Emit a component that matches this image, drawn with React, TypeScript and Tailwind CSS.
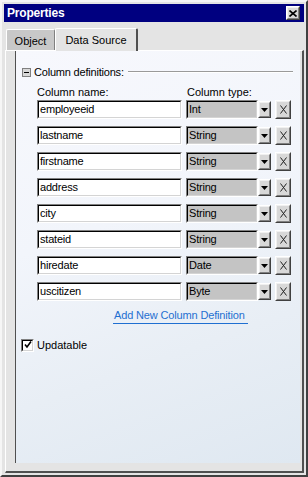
import React from 'react'

const columns = [
  { name: 'employeeid', type: 'Int' },
  { name: 'lastname', type: 'String' },
  { name: 'firstname', type: 'String' },
  { name: 'address', type: 'String' },
  { name: 'city', type: 'String' },
  { name: 'stateid', type: 'String' },
  { name: 'hiredate', type: 'Date' },
  { name: 'uscitizen', type: 'Byte' },
]

// sunken 3d frame used by text boxes, combos and the checkbox
const Sunken = ({ className, children }: { className: string; children?: React.ReactNode }) => (
  <div className="border border-t-[#808080] border-l-[#808080] border-b-white border-r-white">
    <div className={`border border-t-black border-l-black border-b-[#d4d4d4] border-r-[#d4d4d4] ${className}`}>
      {children}
    </div>
  </div>
)

const Raised = ({ className, children }: { className: string; children?: React.ReactNode }) => (
  <div className="border border-t-white border-l-white border-b-[#404040] border-r-[#404040]">
    <div className={`border border-t-[#f0f0f0] border-l-[#f0f0f0] border-b-[#808080] border-r-[#808080] bg-[#d8d8d8] flex items-center justify-center ${className}`}>
      {children}
    </div>
  </div>
)

const ColumnRow = ({ name, type }: { name: string; type: string }) => (
  <div className="flex items-center h-[19px]">
    <Sunken className="w-[143px] h-[17px] bg-white pl-[1px] leading-[15px] tracking-[-0.2px]">{name}</Sunken>
    <div className="ml-[4px] flex items-center">
      <Sunken className="w-[70px] h-[17px] bg-[#c4c4c4] pl-[1px] leading-[15px] tracking-[-0.2px]">{type}</Sunken>
      <Raised className="w-[11px] h-[15px]">
        <svg width="7" height="4" viewBox="0 0 7 4">
          <path d="M0 0h7L3.5 4z" fill="#000" />
        </svg>
      </Raised>
    </div>
    <div className="ml-[4px]">
      <Raised className="w-[14px] h-[17px]">
        <svg width="7" height="9" viewBox="0 0 7 9">
          <path d="M0.5 0.5L6.5 8.5M6.5 0.5L0.5 8.5" stroke="#202020" strokeWidth="1" />
        </svg>
      </Raised>
    </div>
  </div>
)

export default function App() {
  return (
    <div className="w-[308px] h-[477px] bg-[#e4e4e4] border-2 border-t-[#f6f6f6] border-l-[#f6f6f6] border-r-[#404040] border-b-[#404040] p-[2px] flex flex-col font-['Liberation_Sans',Arial,sans-serif] text-[11px] text-black overflow-hidden">
      {/* title bar */}
      <div className="h-[18px] bg-[#000080] flex items-center justify-between pl-[3px] pr-[4px] shrink-0">
        <span className="text-white font-bold text-[12px] tracking-[-0.2px]">Properties</span>
        <Raised className="w-[12px] h-[12px]">
          <svg width="8" height="7" viewBox="0 0 8 7">
            <path d="M0.5 0.5L7.5 6.5M7.5 0.5L0.5 6.5" stroke="#000" strokeWidth="1.6" />
          </svg>
        </Raised>
      </div>

      {/* tabs */}
      <div className="mt-[5px] h-[23px] flex items-end pl-[2px] shrink-0">
        <div className="w-[49px] h-[21px] bg-[#c8c8c8] border border-t-white border-l-white border-r-[#808080] border-b-0 rounded-t-[2px] flex items-center justify-center pt-[2px]">
          Object
        </div>
        <div className="w-[83px] h-[23px] bg-[#e4e4e4] border-t border-l border-white border-r-2 border-r-[#505050] rounded-t-[2px] flex justify-center pt-[3px] relative z-10 -mb-[1px]">
          Data Source
        </div>
      </div>

      {/* tab page */}
      <div className="flex-1 ml-[1px] border border-t-white border-l-white border-r-2 border-r-[#505050] border-b-2 border-b-[#505050] pl-[9px] pr-[2px] pb-[8px] flex">
        <div className="flex-1 border-l border-l-[#505050] bg-[linear-gradient(160deg,#f7f8fd_0%,#f2f5fb_40%,#e8eef5_70%,#dfe8f1_100%)] pt-[15px] pl-[6px] flex flex-col">
          {/* group header */}
          <div className="flex items-center h-[12px]">
            <div className="w-[9px] h-[9px] border border-[#808080] bg-[#d8d8d8] flex items-center justify-center">
              <div className="w-[5px] h-[1px] bg-black" />
            </div>
            <span className="ml-[3px] tracking-[-0.2px]">Column definitions:</span>
            <div className="flex-1 ml-[4px] mr-[7px] border-t border-t-[#9a9a9a] border-b border-b-white" />
          </div>

          <div className="ml-[15px] mt-[7px] flex h-[14px] leading-[14px]">
            <span className="w-[150px]">Column name:</span>
            <span>Column type:</span>
          </div>

          <div className="ml-[15px] mt-[1px] flex flex-col gap-[7px]">
            {columns.map((c) => (
              <ColumnRow key={c.name} {...c} />
            ))}
          </div>

          <div className="ml-[91px] w-[135px] mt-[8px] pl-[1px] text-[#1f6fd1] border-b border-b-[#1f6fd1] leading-[13px] pb-[1px] tracking-[-0.15px]">
            Add New Column Definition
          </div>

          <div className="mt-[13px] -ml-[1px] flex items-center">
            <Sunken className="w-[11px] h-[11px] bg-white flex items-center justify-center">
              <svg width="8" height="8" viewBox="0 0 8 8">
                <path d="M1 3.5L3 6L7 0.5" stroke="#000" strokeWidth="1.6" fill="none" />
              </svg>
            </Sunken>
            <span className="ml-[3px]">Updatable</span>
          </div>
        </div>
      </div>
    </div>
  )
}
